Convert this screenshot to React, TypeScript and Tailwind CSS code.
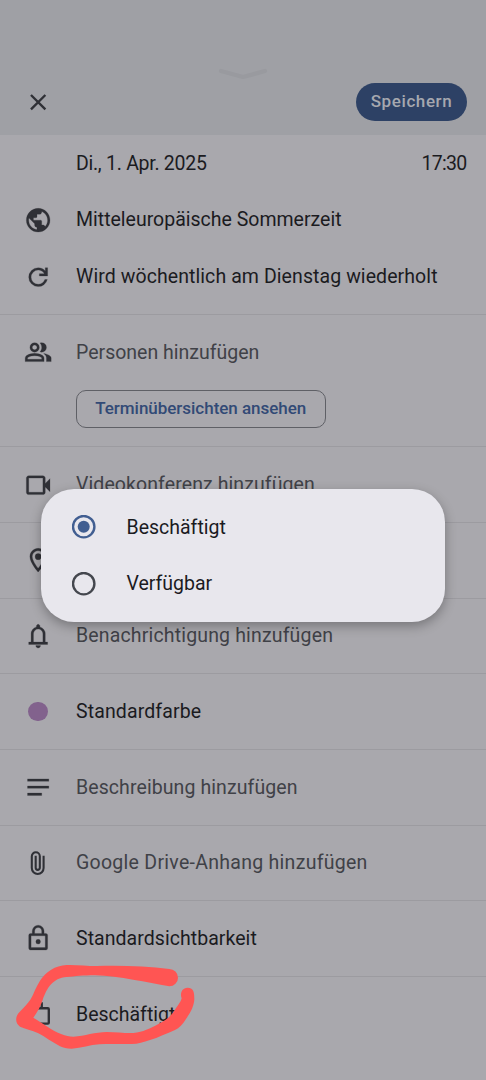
import type { ReactNode } from "react";

const icons = {
  globe:
    "M12 2C6.48 2 2 6.48 2 12s4.48 10 10 10 10-4.48 10-10S17.52 2 12 2zm-1 17.93c-3.95-.49-7-3.85-7-7.93 0-.62.08-1.21.21-1.79L9 15v1c0 1.1.9 2 2 2v1.93zm6.9-2.54c-.26-.81-1-1.39-1.9-1.39h-1v-3c0-.55-.45-1-1-1H8v-2h2c.55 0 1-.45 1-1V7h2c1.1 0 2-.9 2-2v-.41c2.93 1.19 5 4.06 5 7.41 0 2.08-.8 3.97-2.1 5.39z",
  repeat:
    "M12 20q-3.35 0-5.675-2.325T4 12t2.325-5.675T12 4q1.725 0 3.3.713T18 6.75V4h2v7h-7V9h4.2q-.8-1.4-2.187-2.2T12 6Q9.5 6 7.75 7.75T6 12t1.75 4.25T12 18q1.925 0 3.475-1.1T17.65 14h2.1q-.7 2.65-2.85 4.325T12 20",
  people:
    "M1 20v-2.8q0-.85.438-1.562T2.6 14.55q1.55-.775 3.15-1.162T9 13t3.25.388t3.15 1.162q.725.375 1.163 1.088T17 17.2V20zm18 0v-3q0-1.1-.612-2.113T16.65 13.15q1.275.15 2.4.513t2.1.887q.9.5 1.375 1.112T23 17v3zM6.175 10.825Q5 9.65 5 8t1.175-2.825T9 4t2.825 1.175T13 8t-1.175 2.825T9 12t-2.825-1.175m11.65 0Q16.65 12 15 12q-.275 0-.7-.062t-.7-.138q.675-.8 1.038-1.775T15 8t-.362-2.025T13.6 4.2q.35-.125.7-.163T15 4q1.65 0 2.825 1.175T19 8t-1.175 2.825M3 18h12v-.8q0-.275-.137-.5t-.363-.35q-1.35-.675-2.725-1.012T9 15t-2.775.338T3.5 16.35q-.225.125-.363.35T3 17.2zm7.413-8.588Q11 8.825 11 8t-.587-1.412T9 6t-1.412.588T7 8t.588 1.413T9 10t1.413-.587",
  video:
    "M4 20q-.825 0-1.412-.587T2 18V6q0-.825.588-1.412T4 4h12q.825 0 1.413.588T18 6v4.5l4-4v11l-4-4V18q0 .825-.587 1.413T16 20zm0-2h12V6H4z",
  place:
    "M12 2C8.13 2 5 5.13 5 9c0 5.25 7 13 7 13s7-7.75 7-13c0-3.87-3.13-7-7-7zM7 9c0-2.76 2.24-5 5-5s5 2.24 5 5c0 2.88-2.88 7.19-5 9.88C9.92 16.21 7 11.85 7 9zM12 6.4a2.6 2.6 0 1 0 0 5.2a2.6 2.6 0 1 0 0-5.2z",
  bell:
    "M4 19v-2h2v-7q0-2.075 1.25-3.687T10.5 4.2v-.7q0-.625.438-1.062T12 2t1.063.438T13.5 3.5v.7q2 .5 3.25 2.113T18 10v7h2v2zm8 3q-.825 0-1.412-.587T10 20h4q0 .825-.587 1.413T12 22m-4-5h8v-7q0-1.65-1.175-2.825T12 6T9.175 7.175T8 10z",
  notes: "M3 5h18v2H3zM3 11h18v2H3zM3 17h12v2H3z",
  lock:
    "M5.5 22Q4 22 4 20.5V9.5Q4 8 5.5 8H7V6q0-2.075 1.463-3.537T12 1t3.538 1.463T17 6v2h1.5Q20 8 20 9.5v11Q20 22 18.5 22zM6 20h12V10H6zM12 13a2 2 0 1 0 0 4a2 2 0 1 0 0-4zM9 8h6V6q0-1.25-.875-2.125T12 3t-2.125.875T9 6z",
};

function Icon({ d }: { d: string }) {
  return (
    <svg
      viewBox="0 0 24 24"
      className="size-[28.35px]"
      fill="#2f3036"
      fillRule="evenodd"
      stroke="#2f3036"
      strokeWidth="0.2"
    >
      <path d={d} />
    </svg>
  );
}

function PaperclipIcon() {
  return (
    <svg viewBox="0 0 24 24" className="size-[28.35px]" fill="none" stroke="#2f3036" strokeWidth="1.75">
      <path d="M16.6 5.7v10.4a5 5 0 0 1-10 0V6.2a3.4 3.4 0 0 1 6.8 0v9.7a1.75 1.75 0 0 1-3.5 0V5.7" />
    </svg>
  );
}

function BriefcaseIcon() {
  return (
    <svg viewBox="0 0 24 24" className="size-[28.35px]" fill="none" stroke="#2f3036" strokeWidth="2">
      <rect x="3" y="7" width="18" height="13" rx="0.8" />
      <path d="M9 7V3h6v4" />
    </svg>
  );
}

interface RowProps {
  icon?: ReactNode;
  label: string;
  className?: string;
  trailing?: ReactNode;
}

function Row({ icon, label, className = "", trailing }: RowProps) {
  return (
    <div className="flex h-[56.7px] items-center pr-[19.5px]">
      <span className="flex w-[76px] shrink-0 justify-center">{icon}</span>
      <span className={`whitespace-nowrap ${className}`}>{label}</span>
      {trailing}
    </div>
  );
}

function Section({ children }: { children: ReactNode }) {
  return <section className="border-t border-[#9c9ba0] py-[8.975px]">{children}</section>;
}

function RadioOption({ label, checked = false }: { label: string; checked?: boolean }) {
  return (
    <div role="radio" aria-checked={checked} className="flex h-[56.7px] items-center pl-[31px]">
      <svg viewBox="0 0 24 24" className="size-6" fill="none">
        <circle cx="11.7" cy="11.7" r="10.7" stroke={checked ? "#415e91" : "#44474e"} strokeWidth="2.4" />
        {checked && <circle cx="11.7" cy="11.7" r="6" fill="#415e91" />}
      </svg>
      <span className="ml-[30.5px] pt-px whitespace-nowrap text-[#1b1b1f]">{label}</span>
    </div>
  );
}

export default function App() {
  return (
    <main className="relative h-[1080px] w-[486px] overflow-hidden bg-[#a9a8ad] font-['Roboto',sans-serif] text-[19.5px] text-[#1b1b1f]">
      <header className="flex h-[135px] flex-col bg-[#9fa0a5]">
        <div className="flex h-[83px] items-end justify-center pb-[2px]">
          <svg
            viewBox="0 0 50 14"
            className="h-[14px] w-[50px]"
            fill="none"
            stroke="#999a9f"
            strokeWidth="4.2"
            strokeLinecap="round"
            strokeLinejoin="round"
          >
            <path d="M3 4 25 10 47 4" />
          </svg>
        </div>
        <div className="flex h-[38px] items-center justify-between pr-[19px]">
          <span className="flex w-[76px] justify-center">
            <svg viewBox="0 0 24 24" className="size-[28.35px]" fill="none" stroke="#2f3036" strokeWidth="2">
              <path d="M5.9 5.9 18.1 18.1M18.1 5.900 5.900 18.100" />
            </svg>
          </span>
          <button className="h-[38px] w-[111px] rounded-full bg-[#2d4165] text-[17px] font-medium tracking-[0.6px] text-[#a6a8af]">
            Speichern
          </button>
        </div>
      </header>

      <div className="pb-[9.1px]">
        <Row
          label="Di., 1. Apr. 2025"
          className="tracking-[-0.27px]"
          trailing={<span className="ml-auto tracking-[-0.7px]">17:30</span>}
        />
        <Row icon={<Icon d={icons.globe} />} label="Mitteleuropäische Sommerzeit" />
        <Row
          icon={<Icon d={icons.repeat} />}
          label="Wird wöchentlich am Dienstag wiederholt"
          className="tracking-[0.08px]"
        />
      </div>

      <Section>
        <Row icon={<Icon d={icons.people} />} label="Personen hinzufügen" className="pt-px text-[#404147]" />
        <div className="flex h-[56.7px] items-center pl-[76px]">
          <button className="h-[38px] w-[249.5px] rounded-[10px] border-[1.5px] border-[#5f6066] text-[17px] font-medium tracking-[-0.03px] text-[#324a76]">
            Terminübersichten ansehen
          </button>
        </div>
      </Section>
      <Section>
        <Row
          icon={<Icon d={icons.video} />}
          label="Videokonferenz hinzufügen"
          className="tracking-[0.09px] text-[#404147]"
        />
      </Section>
      <Section>
        <Row icon={<Icon d={icons.place} />} label="Ort hinzufügen" className="text-[#404147]" />
      </Section>
      <Section>
        <Row
          icon={<Icon d={icons.bell} />}
          label="Benachrichtigung hinzufügen"
          className="tracking-[0.16px] text-[#404147]"
        />
      </Section>
      <Section>
        <Row
          icon={<span className="size-[19.5px] rounded-full bg-[#82628d]" />}
          label="Standardfarbe"
          className="tracking-[0.12px]"
        />
      </Section>
      <Section>
        <Row
          icon={<Icon d={icons.notes} />}
          label="Beschreibung hinzufügen"
          className="tracking-[0.09px] text-[#404147]"
        />
      </Section>
      <Section>
        <Row
          icon={<PaperclipIcon />}
          label="Google Drive-Anhang hinzufügen"
          className="tracking-[0.28px] text-[#404147]"
        />
      </Section>
      <Section>
        <Row icon={<Icon d={icons.lock} />} label="Standardsichtbarkeit" className="tracking-[0.05px]" />
      </Section>
      <Section>
        <Row icon={<BriefcaseIcon />} label="Beschäftigt" />
      </Section>

      <div
        role="dialog"
        className="absolute top-[489px] left-[41px] h-[132.5px] w-[404px] rounded-[33px] bg-[#e8e7ed] py-[9.5px] shadow-[0_4px_12px_rgba(0,0,0,0.3)]"
      >
        <RadioOption label="Beschäftigt" checked />
        <RadioOption label="Verfügbar" />
      </div>

      <svg viewBox="0 0 729 390" className="absolute top-[950px] left-0 h-[130px] w-[243px]" fill="#ff5553">
        <path d="M200 45C230 44 260 48 290 48C360 46 440 48 508 57A26 26 0 0 1 508 109C440 98 360 78 285 76C250 76 225 79 200 81C158 84 140 115 128 150C122 168 113 186 100 203C130 220 155 241 185 253C197 258 208 260 220 260C255 258 285 246 320 246C350 246 375 250 400 249C430 246 450 235 470 225C492 213 508 204 520 187C530 170 542 158 545 145C540 135 543 113 563 113C582 113 583 130 583 148C582 170 570 190 558 207C548 223 538 235 525 240C500 250 475 263 450 270C430 277 415 282 395 282C360 283 330 281 298 283C270 285 245 294 215 296C200 296 190 293 180 289C155 276 135 260 115 250C95 240 75 237 60 230C45 220 45 200 58 187C72 173 84 160 92 148C102 130 107 112 120 92C138 65 165 47 200 45Z" />
      </svg>
    </main>
  );
}
